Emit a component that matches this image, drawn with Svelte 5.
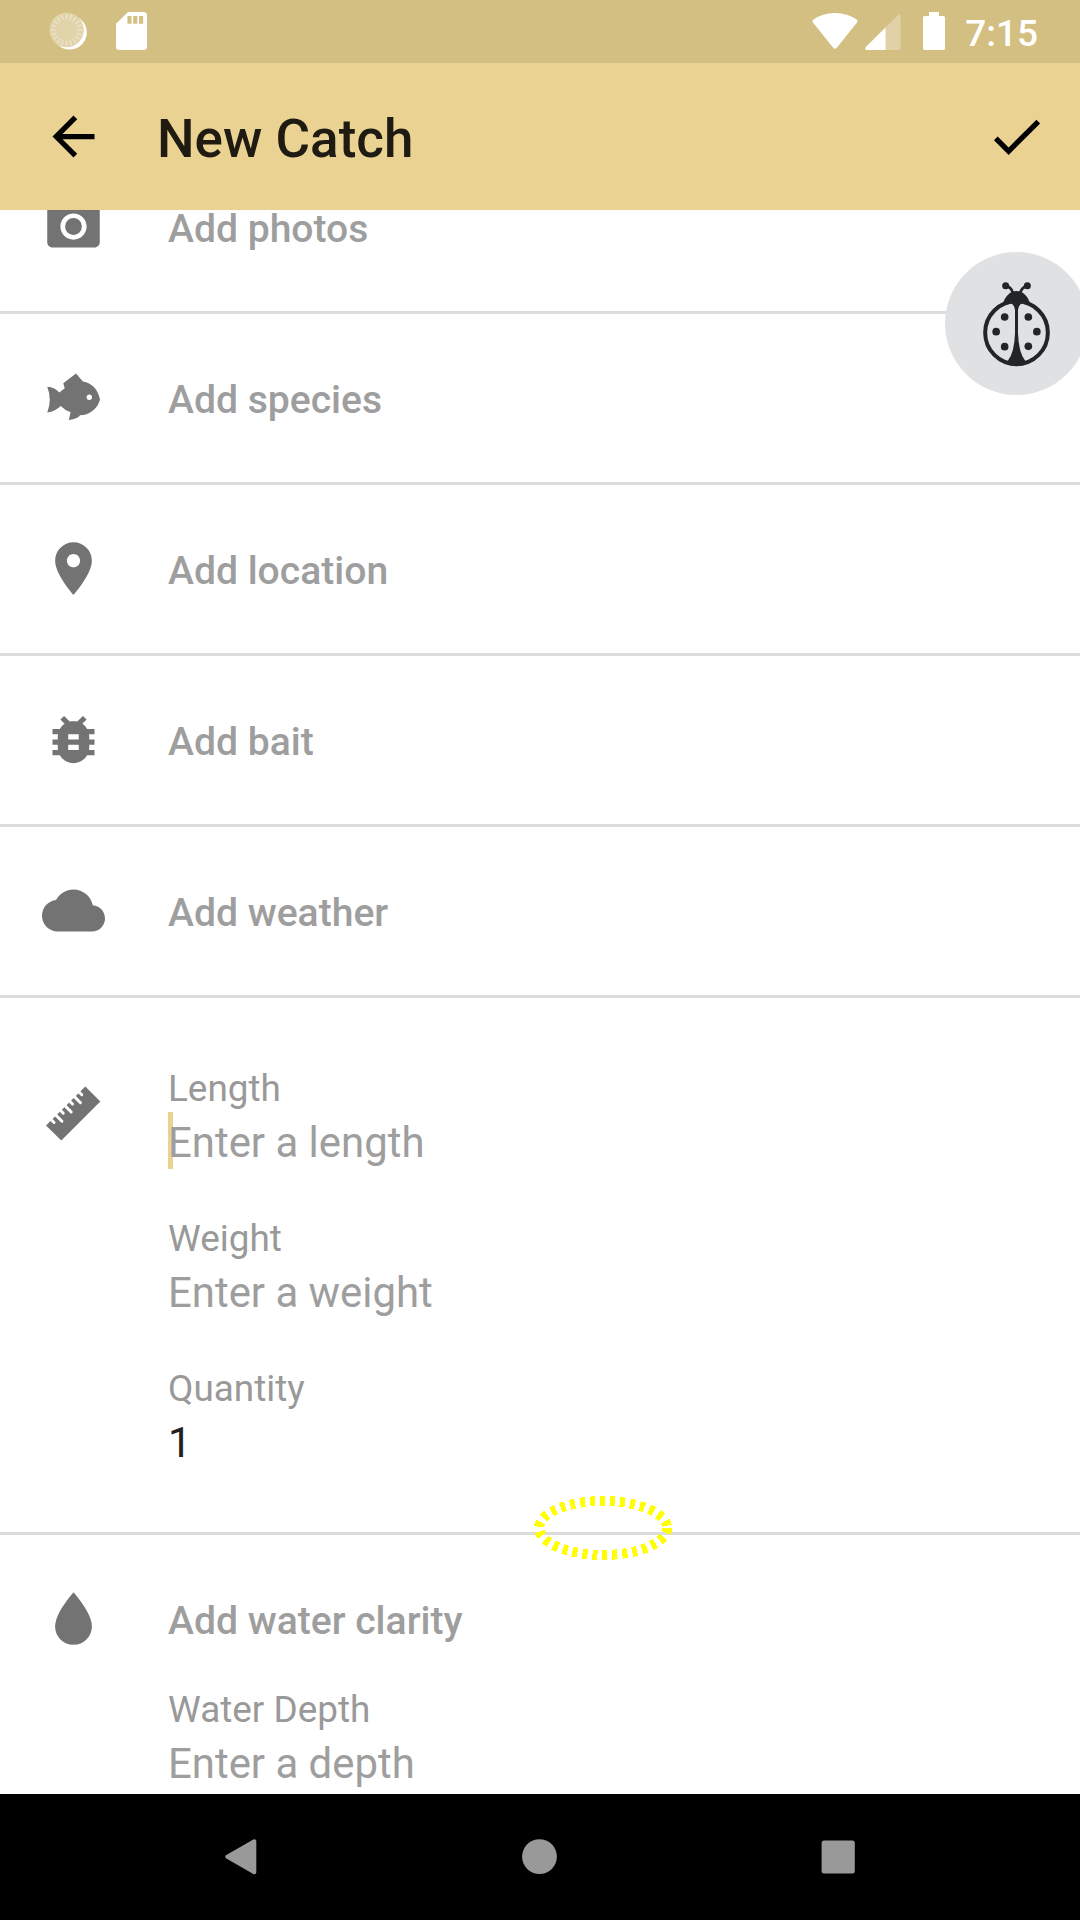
<script>
  const icons = {
    camera:
      'M9 2L7.17 4H4c-1.1 0-2 .9-2 2v12c0 1.1.9 2 2 2h16c1.1 0 2-.9 2-2V6c0-1.1-.9-2-2-2h-3.17L15 2H9zm3 15c-2.76 0-5-2.24-5-5s2.24-5 5-5 5 2.24 5 5-2.24 5-5 5z M15.2 12a3.2 3.2 0 1 1-6.4 0 3.2 3.2 0 1 1 6.4 0z',
    fish:
      'M2 7.9Q5 8.1 6.6 10.1L8.65 8.45 8.1 6.55 12.95 2.85 15.6 5.9C19 6.4 21.4 9 22.1 12.76C21.2 16.2 18.4 18.6 14.5 18.8Q14 19.5 13.4 19.7Q12 20.3 10.2 20.6L10.9 17.6Q8.7 16.8 7.1 15.2Q5.2 17.2 2 17.7Q3.9 12.8 2 7.9zM19.05 11.9a1.03 1.03 0 1 0-2.06 0 1.03 1.03 0 1 0 2.06 0z',
    place:
      'M12 2C8.13 2 5 5.13 5 9c0 5.25 7 13 7 13s7-7.75 7-13c0-3.87-3.13-7-7-7zm0 9.5c-1.38 0-2.5-1.12-2.5-2.5s1.12-2.5 2.5-2.5 2.5 1.12 2.5 2.5-1.12 2.5-2.5 2.5z',
    bug:
      'M20 8h-2.81c-.45-.78-1.07-1.45-1.82-1.96L17 4.41 15.59 3l-2.17 2.17C12.96 5.06 12.49 5 12 5c-.49 0-.96.06-1.41.17L8.41 3 7 4.41l1.62 1.63C7.88 6.55 7.26 7.22 6.81 8H4v2h2.09c-.05.33-.09.66-.09 1v1H4v2h2v1c0 .34.04.67.09 1H4v2h2.81c1.04 1.79 2.97 3 5.19 3s4.15-1.21 5.19-3H20v-2h-2.09c.05-.33.09-.66.09-1v-1h2v-2h-2v-1c0-.34-.04-.67-.09-1H20V8zm-6 8h-4v-2h4v2zm0-4h-4v-2h4v2z',
    cloud:
      'M19.35 10.04C18.67 6.59 15.64 4 12 4 9.11 4 6.6 5.64 5.35 8.04 2.34 8.36 0 10.91 0 14c0 3.31 2.69 6 6 6h13c2.76 0 5-2.24 5-5 0-2.64-2.05-4.78-4.65-4.96z',
    drop: 'M12 2S5 9.75 5 15c0 3.87 3.13 7 7 7s7-3.13 7-7C19 9.75 12 2 12 2z',
    back: 'M20 11H7.83l5.59-5.59L12 4l-8 8 8 8 1.41-1.41L7.83 13H20v-2z',
    check: 'M9 16.17L4.83 12l-1.42 1.41L9 19 21 7l-1.41-1.41z'
  };

  const rows = [
    { icon: 'camera', label: 'Add photos' },
    { icon: 'fish', label: 'Add species' },
    { icon: 'place', label: 'Add location' },
    { icon: 'bug', label: 'Add bait' },
    { icon: 'cloud', label: 'Add weather' }
  ];

  const fields = [
    { label: 'Length', text: 'Enter a length', focused: true },
    { label: 'Weight', text: 'Enter a weight' },
    { label: 'Quantity', text: '1', filled: true }
  ];

  const ticks = Array.from({ length: 20 }, (_, i) => i * 18);

  // Ruler graduations run perpendicular to the diagonal edge, short and long in turn.
  const slots = Array.from({ length: 7 }, (_, i) => {
    const along = -28.5 + i * 9.25;
    const start = 45;
    const end = i % 2 ? 59.2 : 52.6;
    return {
      x1: (start + along) / 2,
      y1: (start - along) / 2,
      x2: (end + along) / 2,
      y2: (end - along) / 2
    };
  });
</script>

{#snippet icon(name)}
  <svg class="icon" viewBox="0 0 24 24"><path fill-rule="evenodd" d={icons[name]} /></svg>
{/snippet}

{#snippet field(f)}
  <div class="field">
    <div class="caption">{f.label}</div>
    <div class="input" class:filled={f.filled} class:focused={f.focused}>{f.text}</div>
  </div>
{/snippet}

<div class="screen">
  <div class="status">
    <div class="group">
      <svg class="spinner" width="40" height="40" viewBox="0 0 40 40">
        <circle cx="22.6" cy="21.4" r="17.2" fill="#fff" />
        <circle cx="19.6" cy="19" r="17.2" fill="#e1d4ab" />
        {#each ticks as a}
          <line x1="19.6" y1="3.2" x2="19.6" y2="8.2" transform="rotate({a} 19.6 19)" stroke="#ede5cd" stroke-width="1.3" />
        {/each}
      </svg>
      <svg class="sd" width="31" height="38" viewBox="4 2 16 20" preserveAspectRatio="none">
        <path fill="#fff" d="M18.4 2h-8.2L4 8.2v12.2c0 .9.7 1.6 1.6 1.6h12.8c.9 0 1.6-.7 1.6-1.6V3.6c0-.9-.7-1.6-1.6-1.6zM12 8.2h-2.1V4.1H12zm3 0h-2.1V4.1H15zm3 0h-2.1V4.1H18z" />
      </svg>
    </div>
    <div class="group right">
      <svg width="46" height="38" viewBox="0 0 46 38">
        <path fill="#fff" d="M1 7.8Q10.500 1 23 1T45 7.800Q46 9 45.200 10.200L24.800 35.800Q23 37.800 21.200 35.800L.8 10.200Q0 9 1 7.800z" />
      </svg>
      <svg class="signal" width="36" height="38" viewBox="0 0 36 38">
        <path fill="#e0d1a8" d="M33.500 2.800Q35.500 2 35.500 4.500V36.500Q35.500 38 34 38H20V16z" />
        <path fill="#fff" d="M20.500 15.600V38H1.800Q-.8 37.300.8 35z" />
      </svg>
      <svg class="battery" width="22" height="38" viewBox="0 0 22 38">
        <path fill="#fff" d="M6 0h10v4h4.500q1.500 0 1.500 1.500v31q0 1.500-1.500 1.500h-19Q0 38 0 36.500v-31Q0 4 1.500 4H6z" />
      </svg>
      <span class="clock">7:15</span>
    </div>
  </div>

  <header>
    {@render icon('back')}
    <h1>New Catch</h1>
    {@render icon('check')}
  </header>

  <main>
    {#each rows as row}
      <div class="row">
        {@render icon(row.icon)}
        <span class="label">{row.label}</span>
      </div>
    {/each}

    <div class="section measures">
      <svg class="icon ruler" viewBox="0 0 63 63">
        <path d="M4 43.500L43.300 4.500 58.300 19.500 19.300 58.500z" />
        {#each slots as s}
          <line x1={s.x1} y1={s.y1} x2={s.x2} y2={s.y2} />
        {/each}
      </svg>
      <div class="fields">
        {#each fields as f}
          {@render field(f)}
        {/each}
      </div>
    </div>

    <div class="section water">
      <div class="line">
        {@render icon('drop')}
        <span class="label">Add water clarity</span>
      </div>
      {@render field({ label: 'Water Depth', text: 'Enter a depth' })}
    </div>
  </main>

  <nav>
    <svg width="36" height="36" viewBox="0 0 36 36">
      <path d="M4 18L31 2.500V33.500z" transform="translate(.3 -.2)" stroke="#999" stroke-width="4" stroke-linejoin="round" />
    </svg>
    <svg width="36" height="36" viewBox="0 0 36 36"><circle cx="17.500" cy="17.600" r="17.400" /></svg>
    <svg width="36" height="36" viewBox="0 0 36 36"><rect x=".6" y="1.400" width="33.200" height="33.200" rx="2.500" /></svg>
  </nav>

  <svg class="fab" viewBox="495 756 429 429">
    <circle class="disc" cx="709.500" cy="970.500" r="214.500" />
    <g class="ink">
      <circle class="shell" cx="709.500" cy="998" r="94" />
      <path d="M669 910C677 886 692 873 709.500 873S743 886 750 910Q728 905 720 914Q715 920 714 930V1000Q716 1060 736 1083L750 1087Q730 1099 709.500 1099T669 1087L683 1083Q703 1060 705 1000V930Q704 920 699 914Q690 905 669 910z" />
      <circle cx="677" cy="857" r="10.500" /><circle cx="742" cy="857" r="10.500" />
      <path class="feeler" d="M679 859Q693 860 698 877M740 859Q727 860 721 877" />
      <circle cx="674" cy="951" r="11.500" /><circle cx="745" cy="951" r="11.500" />
      <circle cx="648.500" cy="995" r="11.500" /><circle cx="770.500" cy="995" r="11.500" />
      <circle cx="674" cy="1040" r="11.500" /><circle cx="745" cy="1039" r="11.500" />
    </g>
  </svg>

  <svg class="highlight" viewBox="0 0 140 66">
    <ellipse cx="70" cy="33" rx="64" ry="27" />
  </svg>
</div>

<style>
  :global(body) {
    margin: 0;
  }
  .screen {
    position: relative;
    width: 1080px;
    height: 1920px;
    overflow: hidden;
    display: flex;
    flex-direction: column;
    background: #fff;
    font-family: Roboto, sans-serif;
  }
  svg {
    display: block;
    flex: none;
  }
  .status {
    height: 63px;
    flex: none;
    box-sizing: border-box;
    padding: 0 42px 0 47px;
    display: flex;
    justify-content: space-between;
    background: #d4bf82;
  }
  .group {
    display: flex;
    align-items: flex-start;
    padding-top: 12px;
  }
  .spinner {
    margin: -1px 29px 0 0;
  }
  .signal {
    margin-left: 7px;
  }
  .battery {
    margin: 0 20px 0 22px;
  }
  .clock {
    color: #fff;
    font-size: 37px;
    font-weight: 500;
    line-height: 43px;
  }
  header {
    height: 147px;
    flex: none;
    box-sizing: border-box;
    padding: 0 32px 0 42px;
    display: flex;
    align-items: center;
    background: #ead392;
  }
  header .icon {
    fill: #000;
  }
  h1 {
    flex: 1;
    margin: 0 0 0 52px;
    font-size: 53px;
    font-weight: 500;
    line-height: 62px;
    padding-top: 4px;
    color: #1f1b13;
  }
  .icon {
    width: 63px;
    height: 63px;
    fill: #737373;
  }
  main {
    flex: 1;
    min-height: 0;
    overflow: hidden;
    display: flex;
    flex-direction: column;
  }
  .row {
    height: 168px;
    flex: none;
    padding-left: 42px;
    display: flex;
    align-items: center;
    border-bottom: 3px solid #dcdcdc;
  }
  .row .icon {
    margin-bottom: 1px;
  }
  .row:first-child {
    margin-top: -67px;
  }
  .label {
    margin-left: 63px;
    padding-top: 3px;
    font-size: 39.1px;
    font-weight: 500;
    line-height: 46px;
    color: #9e9e9e;
  }
  .section {
    flex: none;
    padding-left: 42px;
  }
  .measures {
    display: flex;
    align-items: flex-start;
    height: 468px;
    padding-top: 66px;
    border-bottom: 3px solid #dcdcdc;
  }
  .ruler {
    margin-top: 18px;
  }
  .ruler line {
    stroke: #fff;
    stroke-width: 2.9;
    stroke-linecap: round;
  }
  .fields {
    margin-left: 63px;
    display: flex;
    flex-direction: column;
    gap: 42px;
  }
  .caption {
    height: 50px;
    font-size: 36.9px;
    line-height: 50px;
    color: #999;
  }
  .input {
    position: relative;
    z-index: 0;
    height: 58px;
    font-size: 41.9px;
    line-height: 58px;
    color: #9e9e9e;
  }
  .filled {
    color: #212121;
  }
  .focused::before {
    content: '';
    position: absolute;
    z-index: -1;
    left: 0;
    top: -2px;
    width: 5px;
    height: 57px;
    background: #ead392;
  }
  .water {
    padding-top: 52px;
  }
  .line {
    display: flex;
    align-items: center;
  }
  .water .label {
    padding-top: 5px;
  }
  .water .field {
    margin: 35px 0 0 126px;
  }
  .water .field {
    margin-left: 126px;
  }
  nav {
    height: 126px;
    flex: none;
    box-sizing: border-box;
    padding: 0 223px;
    display: flex;
    align-items: center;
    justify-content: space-between;
    background: #000;
    fill: #999;
  }
  .fab {
    position: absolute;
    left: 945px;
    top: 252px;
    width: 143px;
    height: 143px;
  }
  .disc {
    fill: #e0e1e3;
  }
  .ink {
    fill: #222428;
  }
  .shell,
  .feeler {
    fill: none;
    stroke: #222428;
    stroke-width: 12;
  }
  .feeler {
    stroke-width: 8;
  }
  .highlight {
    position: absolute;
    left: 533px;
    top: 1495px;
    width: 140px;
    height: 66px;
  }
  .highlight ellipse {
    fill: none;
    stroke: #ff0;
    stroke-width: 10;
    stroke-dasharray: 5 5;
    shape-rendering: crispEdges;
  }
</style>
